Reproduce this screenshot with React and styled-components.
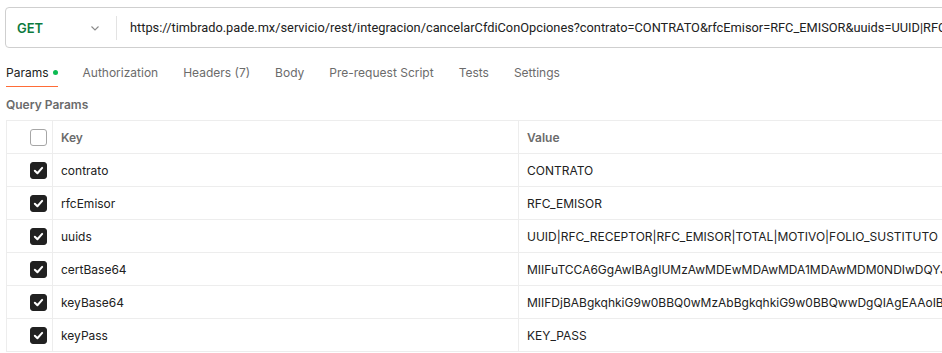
import React from 'react'
import styled, { createGlobalStyle } from 'styled-components'

const GlobalStyle = createGlobalStyle`
  body {
    margin: 0;
    background: #ffffff;
    font-family: Inter, "Noto Sans", sans-serif;
    overflow: hidden;
  }
`

const params = [
  { key: 'contrato', value: 'CONTRATO' },
  { key: 'rfcEmisor', value: 'RFC_EMISOR' },
  { key: 'uuids', value: 'UUID|RFC_RECEPTOR|RFC_EMISOR|TOTAL|MOTIVO|FOLIO_SUSTITUTO' },
  { key: 'certBase64', value: 'MIIFuTCCA6GgAwIBAgIUMzAwMDEwMDAwMDA1MDAwMDM0NDIwDQYJKoZIhvcNAQELBQAwggErMQ8wDQYDVQQDDAZBQy' },
  { key: 'keyBase64', value: 'MIIFDjBABgkqhkiG9w0BBQ0wMzAbBgkqhkiG9w0BBQwwDgQIAgEAAoIBAQACAggAMBQGCCqGSIb3DQMHBAgwggS' },
  { key: 'keyPass', value: 'KEY_PASS' },
]

const tabs = ['Params', 'Authorization', 'Headers (7)', 'Body', 'Pre-request Script', 'Tests', 'Settings']

const Page = styled.div`
  padding: 7px 0 0 5px;
  width: 1100px;
`

const UrlBar = styled.div`
  display: flex;
  align-items: center;
  height: 41px;
  box-sizing: border-box;
  border: 1px solid #cfcfcf;
  border-radius: 4px;
`

const Method = styled.div`
  display: flex;
  align-items: center;
  justify-content: space-between;
  width: 110px;
  padding: 0 16px 0 11px;
  box-sizing: border-box;
  font-size: 13px;
  font-weight: 600;
  color: #0b7a3e;
  svg {
    color: #8a8a8a;
  }
`

const Divider = styled.div`
  width: 1px;
  height: 24px;
  background: #e3e3e3;
`

const Url = styled.div`
  padding-left: 13px;
  color: #212121;
  white-space: nowrap;
  font-family: Roboto, Inter, sans-serif;
  font-size: 12.8px;
`

const Tabs = styled.div`
  display: flex;
  gap: 25px;
  margin-top: 8px;
  padding-left: 1px;
`

const Tab = styled.div`
  display: flex;
  align-items: center;
  gap: 4px;
  height: 31px;
  font-size: 12px;
  color: ${p => (p.$active ? '#212121' : '#6b6b6b')};
  border-bottom: 1px solid ${p => (p.$active ? '#ff6c37' : 'transparent')};
  box-sizing: border-box;
  padding-top: 2px;
`

const Dot = styled.span`
  width: 5px;
  height: 5px;
  border-radius: 50%;
  background: #0cbb52;
`

const Section = styled.div`
  font-size: 12px;
  font-weight: 600;
  color: #6b6b6b;
  padding: 10px 0 0 1px;
  height: 23px;
  box-sizing: border-box;
`

const Table = styled.div`
  margin: 10px 0 0 1px;
  border-left: 1px solid #ededed;
  border-top: 1px solid #ededed;
`

const Row = styled.div`
  display: grid;
  grid-template-columns: 45px 466px 1fr;
  height: 33px;
  border-bottom: 1px solid #ededed;
  box-sizing: border-box;
`

const Cell = styled.div`
  display: flex;
  align-items: center;
  padding-left: ${p => (p.$check ? '0' : '8px')};
  justify-content: ${p => (p.$check ? 'flex-end' : 'flex-start')};
  padding-right: ${p => (p.$check ? '5px' : '0')};
  border-left: ${p => (p.$check ? 'none' : '1px solid #ededed')};
  font-size: 12px;
  font-weight: ${p => (p.$head ? 600 : 400)};
  color: ${p => (p.$head ? '#6b6b6b' : '#212121')};
  white-space: nowrap;
  overflow: hidden;
`

const Box = styled.span`
  display: flex;
  align-items: center;
  justify-content: center;
  width: 17px;
  height: 17px;
  border-radius: 3px;
  box-sizing: border-box;
  background: ${p => (p.$checked ? '#212121' : '#ffffff')};
  border: 1px solid ${p => (p.$checked ? '#212121' : '#a6a6a6')};
`

const Check = ({ checked }) => (
  <Box $checked={checked}>
    {checked && (
      <svg width="11" height="11" viewBox="0 0 12 12">
        <path d="M2 6.3 L4.8 9 L10 3.2" fill="none" stroke="#fff" strokeWidth="2.2" strokeLinecap="round" strokeLinejoin="round" />
      </svg>
    )}
  </Box>
)

const App = () => (
  <Page>
    <GlobalStyle />
    <UrlBar>
      <Method>
        GET
        <svg width="10" height="10" viewBox="0 0 10 10">
          <path d="M1.5 3.5 L5 7 L8.5 3.5" fill="none" stroke="currentColor" strokeWidth="1.1" />
        </svg>
      </Method>
      <Divider />
      <Url>
        https://timbrado.pade.mx/servicio/rest/integracion/cancelarCfdiConOpciones?contrato=CONTRATO&amp;rfcEmisor=RFC_EMISOR&amp;uuids=UUID|RFC_RECEPTOR|RFC_EMISOR
      </Url>
    </UrlBar>
    <Tabs>
      {tabs.map((t, i) => (
        <Tab key={t} $active={i === 0}>
          {t}
          {i === 0 && <Dot />}
        </Tab>
      ))}
    </Tabs>
    <Section>Query Params</Section>
    <Table>
      <Row>
        <Cell $check><Check checked={false} /></Cell>
        <Cell $head>Key</Cell>
        <Cell $head>Value</Cell>
      </Row>
      {params.map(p => (
        <Row key={p.key}>
          <Cell $check><Check checked /></Cell>
          <Cell>{p.key}</Cell>
          <Cell>{p.value}</Cell>
        </Row>
      ))}
    </Table>
  </Page>
)

export default App
